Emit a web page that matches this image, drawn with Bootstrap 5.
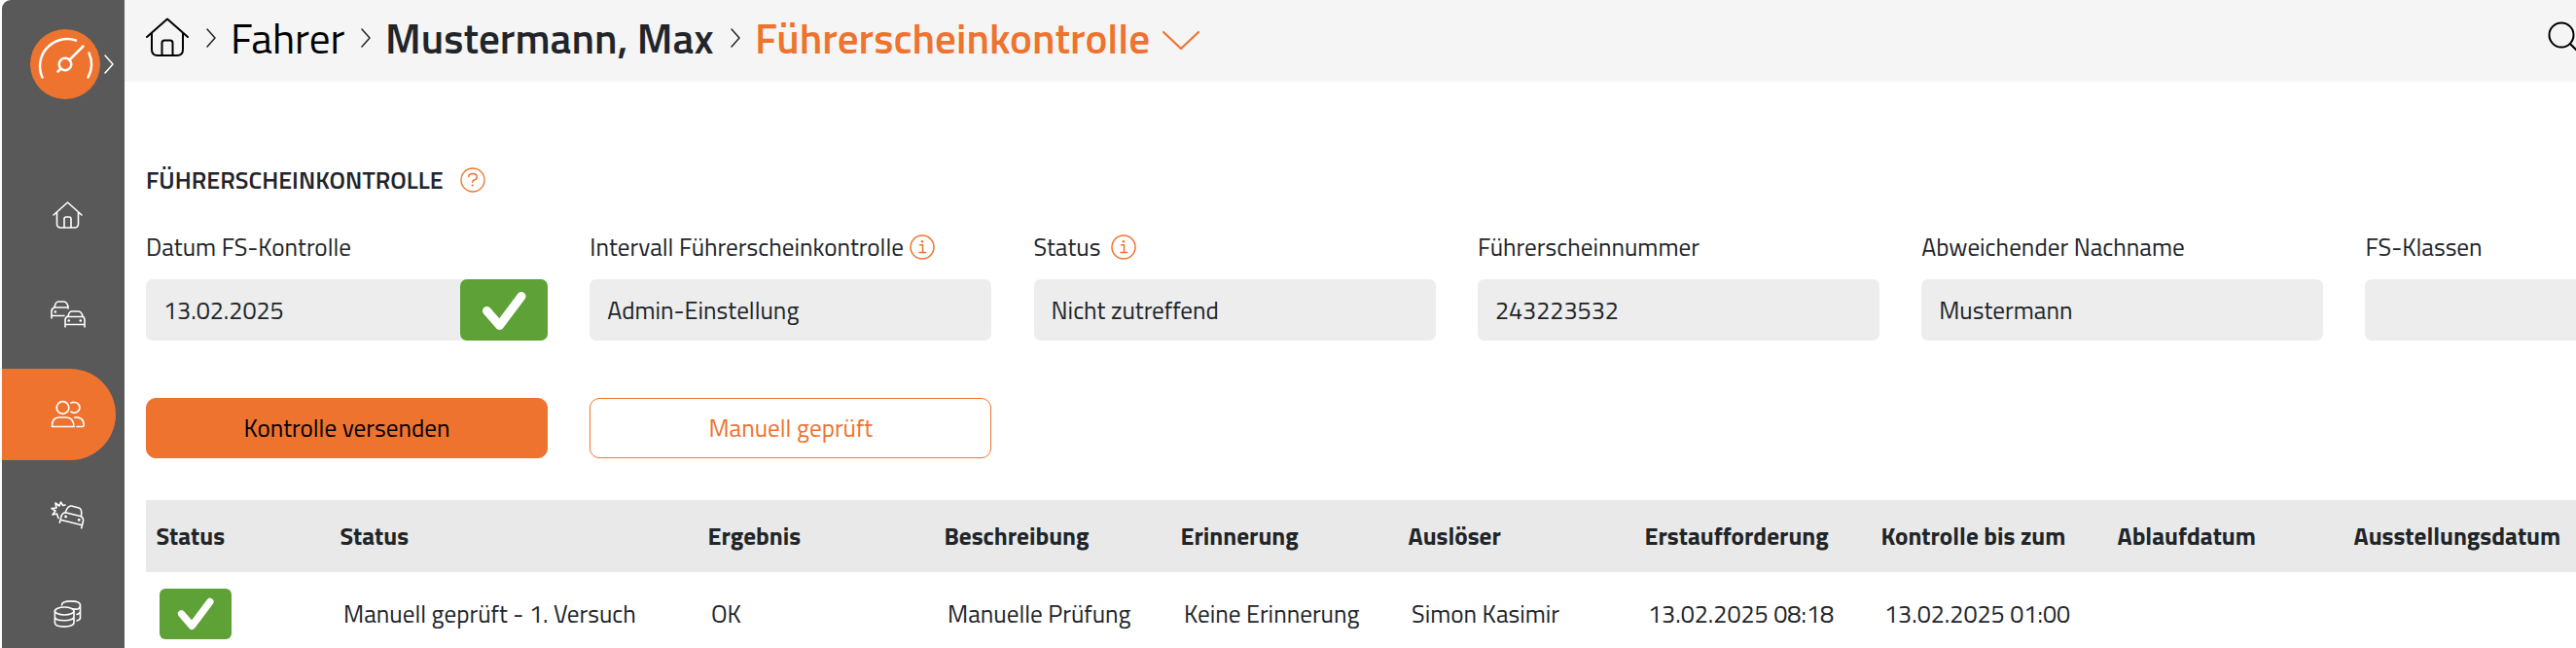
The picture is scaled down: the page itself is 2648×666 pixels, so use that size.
<!DOCTYPE html>
<html lang="de">
<head>
  <meta charset="UTF-8" />
  <meta name="viewport" content="width=device-width, initial-scale=1.0"/>
  <title>Führerscheinkontrolle</title>
  <link rel="stylesheet" href="https://cdn.jsdelivr.net/npm/bootstrap@5.3.0/dist/css/bootstrap.min.css"/>
  <style>
    :root { --brand: #ee732f; --ok: #5da137; }
    body { font-family: "Titillium Web", Roboto, "Open Sans", sans-serif; font-size: 25.2px; line-height: 38px; color: #212529; height: 666px; overflow: hidden; }
    svg { display: block; flex: none; fill: none; stroke: currentColor; stroke-linecap: round; stroke-linejoin: round; overflow: visible; }
    span { white-space: nowrap; }
    .text-brand { color: var(--brand); }

    .side { width: 126px; height: 666px; margin-left: 2px; background: #595959; border-top-left-radius: 9px; color: #fff; padding-top: 30px; }
    .logo-row { padding-left: 29px; height: 72px; margin-bottom: 67.5px; gap: 4px; }
    .side-link { height: 102.5px; padding-left: 48px; color: #fff; }
    .side-link.active { height: 94px; width: 117px; margin: 4.25px 0; background: var(--brand); border-radius: 0 47px 47px 0; }

    .topbar { height: 84px; background: #f5f5f5; padding-left: 22px; font-size: 43.2px; line-height: 52px; }
    .topbar > svg { margin-top: 18px; }
    .topbar > .sep { margin: 29px 0 0 17px; }
    .topbar > .sep-first { margin-left: 18px; }
    .topbar > span { margin: 13px 0 0 15px; }
    .crumb-1 { width: 117px; }
    .crumb-2 { width: 338px; font-weight: 600; }
    .crumb-3 { width: 403px; font-weight: 600; }
    .topbar > .crumb-down { margin: 32px 0 0 16px; }
    .topbar > .top-search { margin: 22px -7px 0 0; }

    .content { padding-left: 22px; }
    .section-title { font-size: 25.2px; line-height: 38px; font-weight: 600; margin: 82px 0 0; }
    .section-title span { width: 307px; }
    .help { margin-left: 16px; }
    .field-row { gap: 43.3px; margin-top: 31px; }
    .field-col { width: 413px; flex: none; }
    .field-label { height: 38px; }
    .field-box { height: 63px; background: #ededed; border-radius: 7px; margin-top: 14px; padding-left: 18px; }
    .info { margin-left: 6px; }
    .info.wide { margin-left: 11px; }
    .check-box { background: var(--ok); border-radius: 7px; color: #fff; }
    .check-box.big { width: 90px; height: 63px; }
    .check-box.small-check { width: 74px; height: 52px; border-radius: 6px; }
    .button-row { gap: 43.3px; margin-top: 59px; }
    .btn-fs { width: 413px; height: 62px; flex: none; font-size: 25.2px; line-height: 38px; border-radius: 10px; padding: 0; border: 1px solid var(--brand); }
    .btn-fs.solid { background: var(--brand); color: #000; }

    .grid-head, .grid-line { display: grid; grid-template-columns: 189px 378px 243px 243px 234px 243px 243px 243px 243px 239px; align-items: center; }
    .grid-head { height: 74px; margin-top: 43px; padding-left: 10.5px; background: #e9e9e9; font-weight: 700; }
    .grid-line { height: 85px; padding-left: 14px; }
  </style>
</head>
<body>
  <div class="d-flex">
    <nav class="side flex-shrink-0">
      <div class="logo-row d-flex align-items-center">
        <svg width="72" height="72" viewBox="0 0 72 72" stroke-width="2.5">
          <circle cx="36" cy="36" r="36" fill="#ee732f" stroke="none"/>
          <path d="M12.5 49.5A28 28 0 0 1 47 11.5M60.5 24.5A28 28 0 0 1 59.5 49.5M40.5 31.500L54.5 17.5M31.5 40.5L28.5 43.5"/>
          <circle cx="36" cy="36" r="6.300"/>
        </svg>
        <svg width="10" height="20" viewBox="0 0 10 20" stroke-width="1.500"><path d="M1 1l8 9-8 9"/></svg>
      </div>
      <a class="side-link d-flex align-items-center">
        <svg width="38" height="38" viewBox="0 0 38 38" stroke-width="1.600"><path d="M5 19L19.500 6 34 19M8.500 16v12q0 4 4 4h14q4 0 4-4V16M16 32v-9q0-2 2-2h3q2 0 2 2v9"/></svg>
      </a>
      <a class="side-link d-flex align-items-center">
        <svg width="38" height="38" viewBox="0 0 38 38" stroke-width="1.600">
          <path d="M3 23v-7q0-3 3-4 1-6 4-6h5q4 0 5 5v2M6 12h14M3 20.500h13"/>
          <path d="M17 32v-7q0-3 3-4 1-5 4-5h6q4 0 5 5 2 1 2 4v7M20 21.500h15M17 29.500h20"/>
          <path stroke-width="2.500" d="M6.800 16.500h.1M20.700 25.500h.1M32.700 25.500h.1"/>
        </svg>
      </a>
      <a class="side-link active d-flex align-items-center">
        <svg width="38" height="38" viewBox="0 0 38 38" stroke-width="1.700">
          <circle cx="14.500" cy="12" r="6.300"/>
          <path d="M3.500 31.500q-.3-9.500 7.500-9.500h7q7.500 0 8 9.500zM23 7q2-.7 3.500-.5a5.400 5.400 0 0 1 0 10.800q-2 0-3.500-1M26.500 22q8.500-.5 9.500 6 .8 3.500-1.500 3.500h-5.500"/>
        </svg>
      </a>
      <a class="side-link d-flex align-items-center">
        <svg width="38" height="38" viewBox="0 0 38 38" stroke-width="1.600">
          <path d="M10 23.500L8.500 19 4 20l3-4-4-2.500 5-.5L7 8l4 3L12.500 7l2.200 3.500L17 10"/>
          <g transform="rotate(14 24 21)"><path d="M13.500 31v-7q0-3 3-4.500 1-8 4.500-8h8q3.500 0 4.500 8 3 1.500 3 4.500v7M16.500 19.500h17M13.500 28h23"/><path stroke-width="2.800" d="M18 23.500h.1M32 23.500h.1"/></g>
        </svg>
      </a>
      <a class="side-link d-flex align-items-center">
        <svg width="38" height="38" viewBox="0 0 38 38" stroke-width="1.600">
          <ellipse cx="16.200" cy="16" rx="9.800" ry="4"/>
          <path d="M6.400 16v12c0 5.500 19.600 5.500 19.600 0V16M6.400 22c0 5 19.600 5 19.600 0M13.500 10c0-5.500 19-5.500 19 0s-6 4-8 3.800M32.500 10v13q0 2-3.500 3M32.500 16.500q0 2-3.500 3"/>
        </svg>
      </a>
    </nav>

    <main class="flex-grow-1 overflow-hidden">
      <header class="topbar d-flex align-items-start">
        <svg class="text-black" width="44" height="40" viewBox="0 0 44 40" stroke-width="2"><path d="M1 20L22 1.500 43 20M6 16v17q0 6 6 6h20q6 0 6-6V16M16.500 39V26q0-2.500 2.500-2.500h6q2.500 0 2.500 2.500v13"/></svg>
        <svg class="sep sep-first" width="10" height="20" viewBox="0 0 10 20" stroke-width="1.500"><path d="M1 1l8 9-8 9"/></svg>
        <span class="crumb-1 text-black">Fahrer</span>
        <svg class="sep" width="10" height="20" viewBox="0 0 10 20" stroke-width="1.500"><path d="M1 1l8 9-8 9"/></svg>
        <span class="crumb-2">Mustermann, Max</span>
        <svg class="sep" width="10" height="20" viewBox="0 0 10 20" stroke-width="1.500"><path d="M1 1l8 9-8 9"/></svg>
        <span class="crumb-3 text-brand">Führerscheinkontrolle</span>
        <svg class="text-brand crumb-down" width="38" height="20" viewBox="0 0 38 20" stroke-width="2.200"><path d="M1 1l18 17L37 1"/></svg>
        <svg class="ms-auto top-search text-black" width="36" height="36" viewBox="0 0 36 36" stroke-width="2"><circle cx="14" cy="14" r="12.500"/><path d="M23 23l11 11"/></svg>
      </header>

      <div class="content">
        <h2 class="section-title d-flex align-items-center">
          <span>FÜHRERSCHEINKONTROLLE</span>
          <svg class="text-brand help" width="26" height="26" viewBox="0 0 26 26" stroke-width="1.300"><circle cx="13" cy="13" r="12"/><path stroke-width="1.500" d="M8.800 9.500q0-3 4.200-3t4.200 3.300q0 2.700-3 3.200-1.500.3-1.500 2.200"/><path stroke-width="2.200" d="M12.700 18.500h.1"/></svg>
        </h2>

        <div class="field-row d-flex">
          <div class="field-col">
            <div class="field-label"><span>Datum FS-Kontrolle</span></div>
            <div class="field-box d-flex align-items-center justify-content-between">
              <span>13.02.2025</span>
              <div class="check-box big d-flex align-items-center justify-content-center"><svg width="46" height="40" viewBox="0 0 46 40" stroke-width="9"><path d="M5.500 20.500L18.500 35.500 41 5.500"/></svg></div>
            </div>
          </div>
          <div class="field-col">
            <div class="field-label d-flex align-items-center"><span>Intervall Führerscheinkontrolle</span>
              <svg class="text-brand info" width="26" height="26" viewBox="0 0 26 26" stroke-width="1.500"><circle cx="13" cy="13" r="12"/><path d="M10.500 10.800h3v7.400M10 18.400h6.500"/><path stroke-width="2.400" d="M12.900 7.200h.1"/></svg>
            </div>
            <div class="field-box d-flex align-items-center"><span>Admin-Einstellung</span></div>
          </div>
          <div class="field-col">
            <div class="field-label d-flex align-items-center"><span>Status</span>
              <svg class="text-brand info wide" width="26" height="26" viewBox="0 0 26 26" stroke-width="1.500"><circle cx="13" cy="13" r="12"/><path d="M10.500 10.800h3v7.400M10 18.400h6.500"/><path stroke-width="2.400" d="M12.900 7.200h.1"/></svg>
            </div>
            <div class="field-box d-flex align-items-center"><span>Nicht zutreffend</span></div>
          </div>
          <div class="field-col">
            <div class="field-label"><span>Führerscheinnummer</span></div>
            <div class="field-box d-flex align-items-center"><span>243223532</span></div>
          </div>
          <div class="field-col">
            <div class="field-label"><span>Abweichender Nachname</span></div>
            <div class="field-box d-flex align-items-center"><span>Mustermann</span></div>
          </div>
          <div class="field-col">
            <div class="field-label"><span>FS-Klassen</span></div>
            <div class="field-box"></div>
          </div>
        </div>

        <div class="button-row d-flex">
          <button class="btn btn-fs solid">Kontrolle versenden</button>
          <button class="btn btn-fs text-brand">Manuell geprüft</button>
        </div>

        <div class="grid-head">
          <span>Status</span>
          <span>Status</span>
          <span>Ergebnis</span>
          <span>Beschreibung</span>
          <span>Erinnerung</span>
          <span>Auslöser</span>
          <span>Erstaufforderung</span>
          <span>Kontrolle bis zum</span>
          <span>Ablaufdatum</span>
          <span>Ausstellungsdatum</span>
        </div>
        <div class="grid-line">
          <div class="check-box small-check d-flex align-items-center justify-content-center"><svg width="38" height="33" viewBox="0 0 46 40" stroke-width="9"><path d="M5.500 20.500L18.500 35.500 41 5.500"/></svg></div>
          <span>Manuell geprüft - 1. Versuch</span>
          <span>OK</span>
          <span>Manuelle Prüfung</span>
          <span>Keine Erinnerung</span>
          <span>Simon Kasimir</span>
          <span>13.02.2025 08:18</span>
          <span>13.02.2025 01:00</span>
        </div>
      </div>
    </main>
  </div>

  <script src="https://cdn.jsdelivr.net/npm/bootstrap@5.3.0/dist/js/bootstrap.bundle.min.js"></script>
</body>
</html>
